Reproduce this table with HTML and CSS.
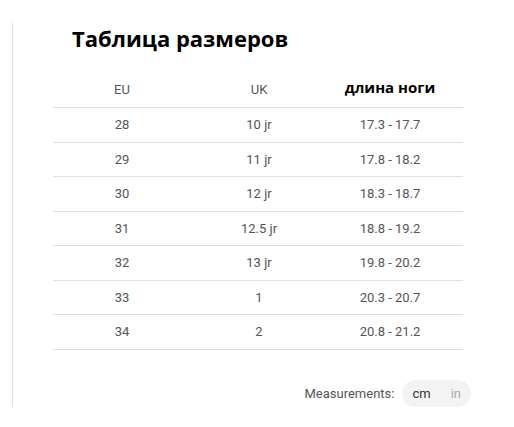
FILE: index.html
```html
<!DOCTYPE html>
<html lang="ru">
<head>
<meta charset="utf-8">
<link rel="stylesheet" href="styles.css">
</head>
<body>
<div class="page">
  <div class="panel">
    <h1 class="title">Таблица размеров</h1>
    <div class="table">
      <div class="row head">
        <div class="cell">EU</div>
        <div class="cell">UK</div>
        <div class="cell bold">длина ноги</div>
      </div>
      <div class="row"><div class="cell">28</div><div class="cell">10 jr</div><div class="cell">17.3 - 17.7</div></div>
      <div class="row"><div class="cell">29</div><div class="cell">11 jr</div><div class="cell">17.8 - 18.2</div></div>
      <div class="row"><div class="cell">30</div><div class="cell">12 jr</div><div class="cell">18.3 - 18.7</div></div>
      <div class="row"><div class="cell">31</div><div class="cell">12.5 jr</div><div class="cell">18.8 - 19.2</div></div>
      <div class="row"><div class="cell">32</div><div class="cell">13 jr</div><div class="cell">19.8 - 20.2</div></div>
      <div class="row"><div class="cell">33</div><div class="cell">1</div><div class="cell">20.3 - 20.7</div></div>
      <div class="row"><div class="cell">34</div><div class="cell">2</div><div class="cell">20.8 - 21.2</div></div>
    </div>
    <div class="units">
      <span class="units-label">Measurements:</span>
      <div class="toggle">
        <span class="opt active">cm</span>
        <span class="opt">in</span>
      </div>
    </div>
  </div>
</div>
</body>
</html>
```
FILE: styles.css
```css
* { box-sizing: border-box; }
html, body { margin: 0; padding: 0; background: #fff; }
body { font-family: Roboto, "Liberation Sans", sans-serif; color: #555; min-height: 427px; }
.page { padding: 32px 0 20px 12px; }
.panel {
  border-left: 1px solid #e0e0e0;
  padding-left: 40px;
  width: 462px;
}
.title {
  margin: -9px 0 0 19px;
  font-family: "Open Sans", "Noto Sans", sans-serif;
  font-weight: 700;
  font-size: 22px;
  line-height: 30px;
  color: #000;
  letter-spacing: 0;
}
.table { margin-top: 29px; width: 410px; }
.row {
  display: grid;
  grid-template-columns: 138px 136px 136px;
  height: 34.5px;
  align-items: center;
  border-bottom: 1px solid #e0e0e0;
  font-size: 13px;
}
.row.head { height: 26px; align-items: start; }
.cell { text-align: center; }
.cell:nth-child(3) { padding-right: 10px; }
.bold {
  font-family: "Open Sans", "Noto Sans", sans-serif;
  font-weight: 700;
  font-size: 15px;
  color: #000;
  line-height: 18px;
  margin-top: -4px;
}
.units {
  display: flex;
  justify-content: flex-end;
  align-items: center;
  gap: 8px;
  width: 418px;
  margin-top: 30px;
  font-size: 13px;
}
.units-label { color: #555; }
.toggle {
  display: flex;
  align-items: center;
  background: #f3f3f3;
  border-radius: 14px;
  height: 27px;
  padding: 0 10px;
  gap: 20px;
}
.opt { color: #aaa; }
.opt.active { color: #333; }
```
